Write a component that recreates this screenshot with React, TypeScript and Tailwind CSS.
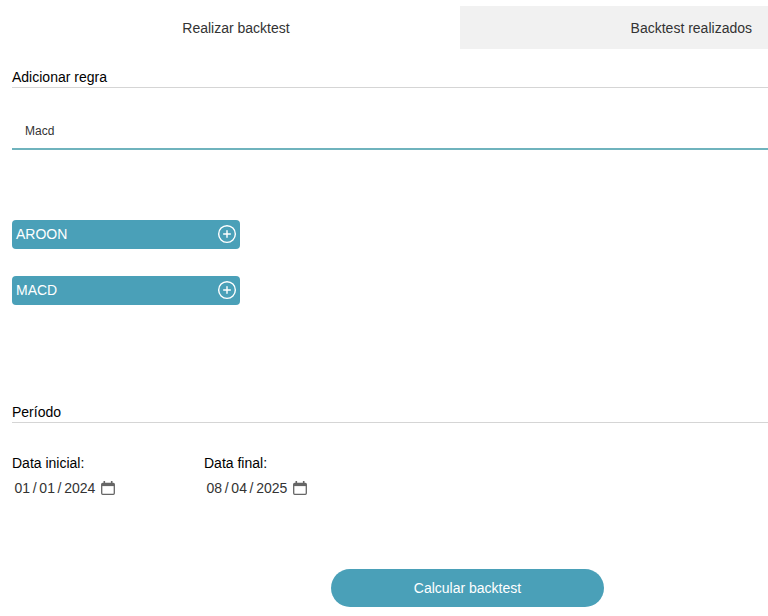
import { CirclePlus } from 'lucide-react';

const font = "font-['Liberation_Sans',Arial,sans-serif]";

const RuleButton = ({ label }: { label: string }) => (
  <div className="flex h-[29px] w-[228px] items-center justify-between rounded-[4px] bg-[#4aa0b8] pb-[1px] pl-1 pr-[3px] text-sm text-white">
    <span className="pb-[1px]">{label}</span>
    <CirclePlus size={20} strokeWidth={1.7} />
  </div>
);

const SectionTitle = ({ children }: { children: string }) => (
  <div className="ml-3 border-b border-[#d5d5d5] pb-[2px] text-sm leading-4 text-black">{children}</div>
);

const CalendarIcon = () => (
  <svg width="14" height="14" viewBox="0 0 14 14" fill="none" stroke="#666666" strokeWidth="1.3">
    <rect x="0.7" y="2.4" width="12.6" height="10.9" rx="1" />
    <path d="M0.7 3.9h12.6" strokeWidth="2.4" />
    <path d="M3.3 0v2.5M10.7 0v2.5" strokeWidth="1.6" />
  </svg>
);

const DateField = ({ label, parts }: { label: string; parts: string[] }) => (
  <div className="flex w-[192px] flex-col">
    <label className="text-sm leading-4 text-black">{label}</label>
    <div className="mt-[7px] flex h-[20px] items-center text-sm text-[#333333]">
      <div className="ml-[2.5px] flex gap-[2.7px]">
        <span>{parts[0]}</span>
        <span>/</span>
        <span>{parts[1]}</span>
        <span>/</span>
        <span>{parts[2]}</span>
      </div>
      <div className="ml-[5.5px]">
        <CalendarIcon />
      </div>
    </div>
  </div>
);

const App = () => {
  return (
    <div className={`flex h-[616px] w-[768px] flex-col overflow-hidden bg-white ${font}`}>
      {/* 탭 */}
      <div className="mt-[6px] flex h-[43px] text-sm text-[#333333]">
        <div className="flex w-[460px] items-center justify-center pl-3">Realizar backtest</div>
        <div className="flex flex-1 items-center justify-end bg-[#f1f1f1] pr-4">Backtest realizados</div>
      </div>

      <div className="mt-5">
        <SectionTitle>Adicionar regra</SectionTitle>
      </div>

      <div className="ml-3 mt-[25px] flex h-[37px] items-center border-b-2 border-[#6fb3bd] pl-[13px] pt-[1px] text-xs text-[#333333]">
        Macd
      </div>

      {/* 규칙 */}
      <div className="ml-3 mt-[70px] flex flex-col gap-[27px]">
        <RuleButton label="AROON" />
        <RuleButton label="MACD" />
      </div>

      <div className="mt-[99px]">
        <SectionTitle>Período</SectionTitle>
      </div>

      <div className="ml-3 mt-[32px] flex">
        <DateField label="Data inicial:" parts={['01', '01', '2024']} />
        <DateField label="Data final:" parts={['08', '04', '2025']} />
      </div>

      <button className="ml-[331px] mt-[71px] h-[38px] w-[273px] rounded-full bg-[#4aa0b8] text-sm text-white">
        Calcular backtest
      </button>
    </div>
  );
};

export default App;
